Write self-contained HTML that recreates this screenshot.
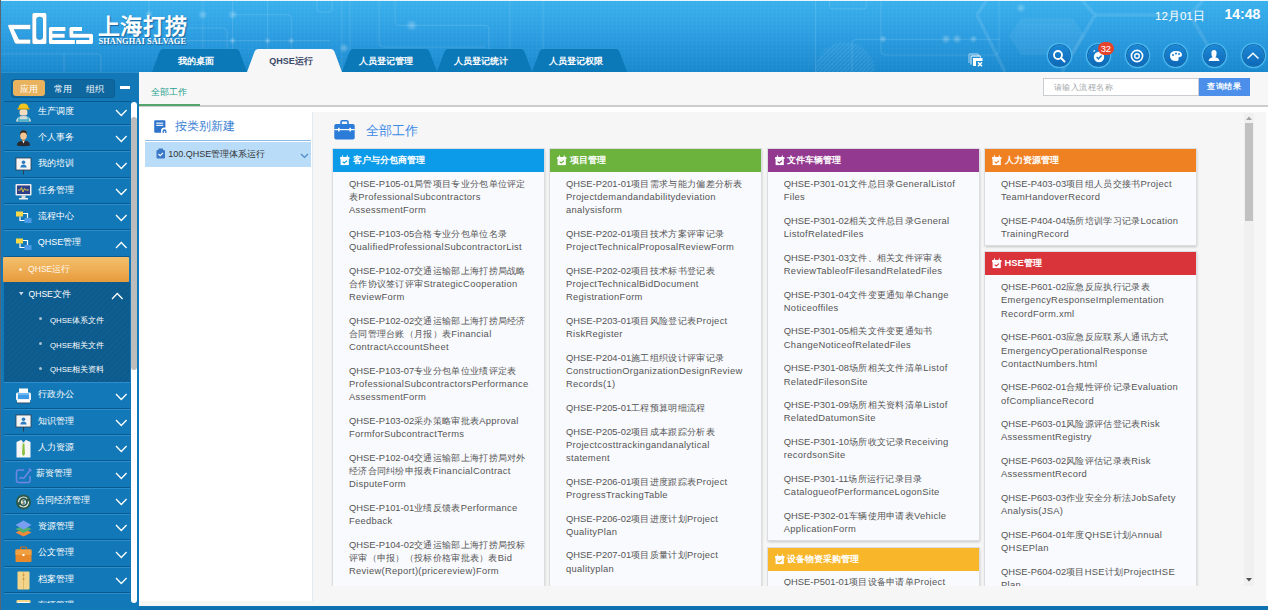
<!DOCTYPE html><html><head><meta charset="utf-8"><style>
*{margin:0;padding:0;box-sizing:border-box}
html,body{width:1268px;height:610px;overflow:hidden;font-family:"Liberation Sans",sans-serif;background:#0f74b2;position:relative}
.a{position:absolute}
#hdr{left:0;top:0;width:1268px;height:72px;background:linear-gradient(180deg,#3ab1ed 0%,#2d9fe2 45%,#1a88cd 100%);overflow:hidden}
.ln{position:absolute;border:1px solid rgba(255,255,255,.12)}
.logo-cn{left:98px;top:14px;font-family:"Liberation Serif",serif;font-weight:bold;font-size:22px;color:#fff;line-height:26px;letter-spacing:0.3px;text-shadow:1px 1px 1px rgba(0,40,90,.5)}
.logo-en{left:98.5px;top:37.5px;font-family:"Liberation Serif",serif;font-weight:bold;font-size:8.4px;color:#fff;line-height:8px;letter-spacing:0.08px;text-shadow:1px 1px 1px rgba(0,40,90,.5);white-space:nowrap}
.tab{position:absolute;top:49px;height:23px;width:95px;font-size:9px;font-weight:bold;text-align:center;line-height:25px;color:#fff}
.tab svg{position:absolute;left:0;top:0}
.tab span{position:relative;left:-3.6px}
.cbtn{position:absolute;top:45px;width:21px;height:21px;border-radius:50%;background:linear-gradient(180deg,#1c88d6 0%,#1477c6 55%,#0e68b6 100%);box-shadow:0 0 0 0.8px #0b5593, 0 0 0 2.1px #47b9f3, 0 0 1.5px 2.6px rgba(90,200,255,.3)}
.cbtn svg{position:absolute;left:0;top:0}
.date{left:1155px;top:8.5px;color:#fff;font-size:11.6px;line-height:13px;white-space:nowrap}
.time{left:1224.5px;top:6px;color:#fff;font-size:14px;font-weight:bold;line-height:16px}
#side{left:0;top:72px;width:139px;height:538px;background:#1378b7;overflow:hidden}
#side .lb{left:0;top:0;width:1px;height:538px;background:#5a6672}
#side .lb2{left:3px;top:0;width:1px;height:538px;background:#0d5f98}
.seg{left:10.5px;top:6.6px;width:104.5px;height:19px;background:#0e679f;border-radius:4px;box-shadow:inset 0 0 0 1px #0c5e93}
.seg .on{left:2.2px;top:1.8px;width:32.6px;height:15.5px;background:#e9b25e;border-radius:3px}
.seg span{position:absolute;top:0;line-height:19px;font-size:9.4px;color:#fff}
.minus{left:120px;top:14.2px;width:9.5px;height:2.8px;background:#fff}
.row{position:absolute;left:4px;width:127px;height:26.35px;border-top:1px solid #2a8fcc;border-bottom:1px solid #0a5a8f}
.row .t{position:absolute;left:33.8px;top:0;line-height:22.8px;font-size:9px;color:#fff;white-space:nowrap}
.row svg.ic{position:absolute;left:11.3px;top:3.5px}
.row svg.ch{position:absolute;left:110.5px;top:9.5px}
.sub{position:absolute;left:4px;width:127px;background:repeating-linear-gradient(135deg,#0e5e91 0px,#0e5e91 2px,#0d5b8d 2px,#0d5b8d 4px)}
.sub .t{position:absolute;font-size:9px;color:#fff;white-space:nowrap}
.sb{left:131px;top:30.2px;width:6px;height:500.5px;background:#fff;border-radius:3.5px}
.sbt{left:131px;top:45px;width:6px;height:252.5px;background:#bdbdbd;border-radius:3px}
#main{left:139px;top:72px;width:1129px;height:534px;background:#f0f0f0;overflow:hidden}
.thead{left:0;top:0;width:1129px;height:35px;background:#f7f7f7;border-bottom:2px solid #cdcdcd}
.thead .tt{left:11.5px;top:0;line-height:40px;font-size:9.4px;color:#26a08e}
.thead .gl{left:0;top:32px;width:61px;height:2px;background:#55a46e}
.srch{left:904px;top:5.8px;width:156px;height:18.5px;background:#fff;border:1px solid #c9ccd0}
.srch span{position:absolute;left:9.5px;top:0;line-height:17px;font-size:8px;letter-spacing:0.5px;color:#a0a4a8}
.sbtn{left:1060px;top:5.8px;width:50.5px;height:18.5px;background:#4b8fea;color:#fff;font-size:8px;letter-spacing:0.5px;line-height:18.5px;text-align:center;font-weight:bold}
.lpanel{left:0;top:34px;width:173px;height:494.5px;background:#fff}
.lp-title{left:36px;top:46.5px;font-size:12px;color:#3b7fd4;line-height:14px;white-space:nowrap}
.lp-line{left:5.8px;top:68px;width:166px;height:1px;background:#8bbbe6}
.lp-row{left:5.8px;top:69.6px;width:166px;height:25.9px;background:#b9ddf9;box-shadow:0 -0.6px 0 #fff}
.lp-row .t{position:absolute;left:23.5px;top:0;line-height:24.2px;font-size:9px;color:#333;white-space:nowrap}
.rpanel{left:173px;top:40px;width:1129px;height:474px;background:#f5f5f5;border-left:1px solid #e4e6e8}
.rtitle{left:226.6px;top:51px;font-size:13.4px;color:#3b8ae6;line-height:16px;white-space:nowrap}
.card{position:absolute;width:211px;background:#f9fafe;box-shadow:0 0 0 1px #dcdde0,0.5px 1px 2.5px 0.5px rgba(0,0,0,.2)}
.card .h{height:22.9px;line-height:22.9px;color:#fff;font-size:9.4px;font-weight:bold;padding-left:19.5px;position:relative;white-space:nowrap}
.card .h svg{position:absolute;left:7.3px;top:5px}
.card .b{padding:6px 4px 4px 16px}
.card .it{font-size:9.4px;color:#555;margin-bottom:10.5px;white-space:nowrap;letter-spacing:0.3px}
.card .it div{height:13.2px;line-height:13.2px}
.card .it b{font-weight:normal;letter-spacing:0}
.vsb{left:1104px;top:40px;width:10.5px;height:474px;background:#f1f1f1}
.vsb .th{position:absolute;left:1.5px;top:11px;width:7.5px;height:98px;background:#c1c1c1}
.bottombar{left:139px;top:606px;width:1129px;height:4px;background:#0f72b0}
</style></head><body><div id="hdr" class="a"><svg class="a" style="left:0;top:0" width="1268" height="72"><defs><radialGradient id="gl"><stop offset="0" stop-color="#fff" stop-opacity=".3"/><stop offset="1" stop-color="#fff" stop-opacity="0"/></radialGradient>
<pattern id="grid" width="4" height="4" patternUnits="userSpaceOnUse"><path d="M4,0 L0,0 0,4" fill="none" stroke="rgba(255,255,255,.035)" stroke-width="1"/></pattern>
<pattern id="hatch" width="3" height="3" patternUnits="userSpaceOnUse" patternTransform="rotate(45)"><rect width="1.2" height="3" fill="rgba(255,255,255,.10)"/></pattern></defs>
<rect x="0" y="0" width="1268" height="72" fill="url(#grid)"/>
<g fill="none" stroke="rgba(255,255,255,.16)" stroke-width="0.8">
<path d="M149,0 V45"/><path d="M0,54 H98 Q101,54 101,57 V72"/><path d="M64,54 V72"/>
<path d="M202.8,0 V72"/><path d="M232.6,0 V72"/><path d="M267.6,0 V72"/><path d="M232.6,14.7 H287.5 Q291.3,14.7 291.3,18.5 V72"/><path d="M150,40.7 H330"/><path d="M180,27.9 H222 Q227,27.9 227,33 V72"/>
<path d="M317,-3 V9 Q317,12 320,12 H329 Q332,12 332,9 V-3"/><path d="M342,0 V72"/><path d="M350,0 V72"/>
<path d="M379,0 V42 Q379,47 384,47 H485"/><path d="M395,0 V21 Q395,25.4 399,25.4 H485 Q489,25.4 489,30 V72"/>
<path d="M510,0 V72"/><path d="M543,0 V72"/>
<path d="M815.5,0 V72"/><path d="M829.5,-3 V6 Q829.5,9 832.5,9 H863.5 Q866.4,9 866.4,6 V-3"/>
<path d="M881,-3 V51 Q881,55 885,55 H995 Q999,55 999,51 V-3"/><path d="M852,72 V43 Q852,39.4 856,39.4 H1000"/>
</g>
<g fill="none" stroke="rgba(255,255,255,.10)" stroke-width="3.5">
<path d="M977,15 L988,-2 M977,15 L1005,72 M1095,15 L1080,-2 M1095,15 L1062,72"/><path d="M1095,15 L1190,15 L1205,-2 M1190,15 L1215,58"/>
</g>
<path d="M1021,18 H1073 L1085,36 L1073,55 H1021 L1009,36 Z" fill="rgba(255,255,255,.06)"/>
<circle cx="845" cy="72" r="30" fill="url(#hatch)"/>
<g fill="url(#gl)"><circle cx="202.8" cy="14.7" r="5"/><circle cx="232.6" cy="14.7" r="5"/><circle cx="232.6" cy="40.7" r="3.5"/><circle cx="267.6" cy="40.7" r="3.5"/><circle cx="291.3" cy="40.7" r="3.5"/><circle cx="411.7" cy="25.4" r="6"/><circle cx="344" cy="48" r="5"/><circle cx="149" cy="14" r="4"/>
<circle cx="883" cy="39" r="4"/><circle cx="946" cy="39" r="5"/><circle cx="957" cy="39" r="5"/><circle cx="973.5" cy="39" r="4"/><circle cx="1021" cy="8" r="5"/></g>
</svg><div class="a" style="left:0;top:0;width:1268px;height:1px;background:#e8f4fb"></div><div class="a" style="left:0;top:0;width:1px;height:72px;background:#5a6672"></div><svg class="a" style="left:0;top:0" width="100" height="50"><g fill="#fff" style="filter:drop-shadow(0.8px 0.8px 0.5px rgba(0,30,70,.6))">
<path d="M9.2,24.7 L30.4,24.7 L30.4,29.2 L13.8,29.2 L19,39.6 L30.4,39.6 L30.4,43.8 L16.8,43.8 Q15.2,43.8 14.6,42.6 L8.2,26.6 Q7.8,24.7 9.2,24.7 Z"/>
<path fill-rule="evenodd" d="M33.8,12.9 L45,12.9 Q46.5,12.9 46.5,14.4 L46.5,42.5 Q46.5,44 45,44 L33.8,44 Q32.3,44 32.3,42.5 L32.3,14.4 Q32.3,12.9 33.8,12.9 Z M39.6,16.8 Q36.3,16.8 36.3,20 L36.3,36.5 Q36.3,39.7 39.6,39.7 Q43,39.7 43,36.5 L43,20 Q43,16.8 39.6,16.8 Z"/>
<path d="M50.4,27.1 L65.5,27.1 L65.5,31 L52.5,31 L52.5,33.8 L64.7,33.8 L64.7,37.7 L52.5,37.7 L52.5,40.1 L74.9,40.1 L74.9,44 L50.4,44 Q48.9,44 48.9,42.5 L48.9,28.6 Q48.9,27.1 50.4,27.1 Z"/>
<path d="M70.9,27.1 L82,27.1 L82,31 L73.3,31 L73.3,33.8 L91.5,33.8 Q93,33.8 93,35.3 L93,42.5 Q93,44 91.5,44 L76.1,44 L76.1,40.1 L89.2,40.1 L89.2,37.7 L70.9,37.7 Q69.4,37.7 69.4,36.2 L69.4,28.6 Q69.4,27.1 70.9,27.1 Z"/>
</g></svg><div class="a logo-cn" lang="zh-CN">上海打捞</div><div class="a logo-en">SHANGHAI SALVAGE</div><div class="tab" style="left:152.00px;color:#fff"><svg width="96" height="23"><path d="M0,23 L7.6,2.5 Q8.5,0 11,0 L84,0 Q86.5,0 87.4,2.5 L95,23 Z" fill="#0b78b8"/></svg><span>我的桌面</span></div><div class="tab" style="left:247.10px;color:#3b4868"><svg width="96" height="23"><path d="M0,23 L7.6,2.5 Q8.5,0 11,0 L84,0 Q86.5,0 87.4,2.5 L95,23 Z" fill="#f7f7f7"/></svg><span>QHSE运行</span></div><div class="tab" style="left:342.20px;color:#fff"><svg width="96" height="23"><path d="M0,23 L7.6,2.5 Q8.5,0 11,0 L84,0 Q86.5,0 87.4,2.5 L95,23 Z" fill="#0b78b8"/></svg><span>人员登记管理</span></div><div class="tab" style="left:437.30px;color:#fff"><svg width="96" height="23"><path d="M0,23 L7.6,2.5 Q8.5,0 11,0 L84,0 Q86.5,0 87.4,2.5 L95,23 Z" fill="#0b78b8"/></svg><span>人员登记统计</span></div><div class="tab" style="left:532.40px;color:#fff"><svg width="96" height="23"><path d="M0,23 L7.6,2.5 Q8.5,0 11,0 L84,0 Q86.5,0 87.4,2.5 L95,23 Z" fill="#0b78b8"/></svg><span>人员登记权限</span></div><svg class="a" style="left:968.3px;top:53px" width="17" height="15"><path d="M1,10 V2 Q1,1 2,1 H9.5 Q10.5,1 10.5,2 V3" fill="none" stroke="rgba(255,255,255,.45)" stroke-width="1.3"/><path d="M3,11.5 V4 Q3,3 4,3 H11.5 Q12.5,3 12.5,4 V4.8" fill="none" stroke="rgba(255,255,255,.7)" stroke-width="1.3"/><path d="M5,13 V5 H14.5 V8 H8 V13 Z" fill="#fff"/><path d="M10,9.3 L14,13.3 M14,9.3 L10,13.3" stroke="#fff" stroke-width="1.5"/></svg><div class="cbtn" style="left:1048.8px"><svg width="22" height="22" style="left:-0.5px;top:-0.5px"><circle cx="10" cy="10" r="4" fill="none" stroke="#fff" stroke-width="1.8"/><path d="M13,13 L16.5,16.5" stroke="#fff" stroke-width="2" stroke-linecap="round"/></svg></div><div class="cbtn" style="left:1088.0px"><svg width="22" height="22" style="left:-0.5px;top:-0.5px"><circle cx="11" cy="12" r="5.2" fill="#fff"/><path d="M8.6,12 L10.4,13.8 L13.6,10.4" fill="none" stroke="#1a7ac8" stroke-width="1.5"/><path d="M5.5,6.5 L7,5.5" stroke="#fff" stroke-width="1.2"/></svg></div><div class="cbtn" style="left:1126.5px"><svg width="22" height="22" style="left:-0.5px;top:-0.5px"><circle cx="11" cy="11" r="5.6" fill="none" stroke="#fff" stroke-width="1.6"/><circle cx="11" cy="11" r="2.3" fill="none" stroke="#fff" stroke-width="1.4"/></svg></div><div class="cbtn" style="left:1165.3px"><svg width="22" height="22" style="left:-0.5px;top:-0.5px"><path d="M5,11 Q5,6 11,6 Q17,6 17,10 Q17,12 14.5,12 Q13,12 13.5,14 Q14,16 11,16 Q5,16 5,11 Z" fill="#fff"/><circle cx="8" cy="10" r="1" fill="#1a7ac8"/><circle cx="11" cy="8.5" r="1" fill="#1a7ac8"/><circle cx="14" cy="9" r="0.9" fill="#1a7ac8"/></svg></div><div class="cbtn" style="left:1203.5px"><svg width="22" height="22" style="left:-0.5px;top:-0.5px"><path d="M11,5 Q13.6,5 13.6,8.3 Q13.6,11 12.3,12.2 Q16,13 16.5,16 L5.5,16 Q6,13 9.7,12.2 Q8.4,11 8.4,8.3 Q8.4,5 11,5 Z" fill="#fff"/></svg></div><div class="cbtn" style="left:1242.5px"><svg width="22" height="22" style="left:-0.5px;top:-0.5px"><path d="M5.5,13.5 L11,8.3 L16.5,13.5" fill="none" stroke="#fff" stroke-width="1.5"/></svg></div><div class="a" style="left:1098px;top:42px;width:15.7px;height:13px;border-radius:6.5px;background:#e6432c;color:#fff;font-size:9.4px;line-height:13px;text-align:center">32</div><div class="a date">12月01日</div><div class="a time">14:48</div></div><div id="side" class="a"><div class="a lb"></div><div class="a" style="left:1px;top:0;width:138px;height:1px;background:#2c8fcc"></div><div class="a seg"><div class="a on"></div><span style="left:9.5px">应用</span><span style="left:43.5px">常用</span><span style="left:75.5px">组织</span></div><div class="a minus"></div><div class="a" style="left:4px;top:29.2px;width:127px;height:1px;background:#0a5a8f"></div><div class="a" style="left:0;top:30.2px;width:130px;height:501.3px;overflow:hidden"><div class="row" style="top:-3.65px"><svg class="ic" width="17" height="20"><path d="M3.5,5.5 Q3.5,0.5 8.5,0.5 Q13.5,0.5 13.5,5.5 Z" fill="#f2c61f"/><rect x="2.5" y="5" width="12" height="1.6" fill="#e0a800"/><rect x="4.6" y="6.5" width="7.8" height="6" rx="2" fill="#f3dcc0"/><path d="M1,18.5 Q1.5,13 8.5,13 Q15.5,13 16,18.5 Z" fill="#d8d8d8"/><rect x="3" y="16.3" width="11" height="1.6" fill="#35b4c8"/><path d="M4,13.5 L4,18 M13,13.5 L13,18" stroke="#35b4c8" stroke-width="1.2"/></svg><span class="t">生产调度</span><svg class="ch" width="13" height="8"><path d="M1,1 L6.3,6.5 L11.6,1" fill="none" stroke="#fff" stroke-width="1.3"/></svg></div><div class="row" style="top:22.70px"><svg class="ic" width="17" height="20"><path d="M5.2,6.5 Q5.2,2.2 8.5,2.2 Q11.8,2.2 11.8,6.5 Q11.8,10.8 8.5,10.8 Q5.2,10.8 5.2,6.5 Z" fill="#f6c690"/><path d="M5,6 Q4.8,1.3 8.5,1.3 Q12.2,1.3 12,6 Q11,3.6 8.5,3.6 Q6,3.6 5,6 Z" fill="#3b2a20"/><path d="M7.3,10.3 L9.7,10.3 L9.7,12 L7.3,12 Z" fill="#e8a860"/><path d="M1.8,16.5 Q1.8,12 8.5,11.8 Q15.2,12 15.2,16.5 Q8.5,17.8 1.8,16.5 Z" fill="#2a2a30"/><path d="M7.4,12 L8.5,14.5 L9.6,12 Z" fill="#fff"/></svg><span class="t">个人事务</span><svg class="ch" width="13" height="8"><path d="M1,1 L6.3,6.5 L11.6,1" fill="none" stroke="#fff" stroke-width="1.3"/></svg></div><div class="row" style="top:49.05px"><svg class="ic" width="17" height="20"><rect x="1" y="2" width="15" height="12" fill="#f4f4f4" stroke="#2c3e50" stroke-width="0.8"/><circle cx="8.5" cy="6.3" r="1.8" fill="#2a7ac0"/><path d="M5.3,11.5 Q5.8,8.5 8.5,8.5 Q11.2,8.5 11.7,11.5 Z" fill="#2a7ac0"/><path d="M8.5,14 L8.5,18.5" stroke="#2c3e50" stroke-width="1"/></svg><span class="t">我的培训</span><svg class="ch" width="13" height="8"><path d="M1,1 L6.3,6.5 L11.6,1" fill="none" stroke="#fff" stroke-width="1.3"/></svg></div><div class="row" style="top:75.40px"><svg class="ic" width="17" height="20"><rect x="0.5" y="2" width="16" height="11.5" rx="1" fill="#eeeeee"/><rect x="2" y="3.5" width="13" height="8.5" fill="#2f3f8a"/><path d="M3,8 L5.5,8 L6.5,5.5 L8,10 L9.5,6.5 L10.5,8 L14,8" fill="none" stroke="#e8d040" stroke-width="0.9"/><rect x="6.5" y="13.5" width="4" height="2.5" fill="#ddd"/><rect x="4" y="16" width="9" height="1.5" fill="#eee"/></svg><span class="t">任务管理</span><svg class="ch" width="13" height="8"><path d="M1,1 L6.3,6.5 L11.6,1" fill="none" stroke="#fff" stroke-width="1.3"/></svg></div><div class="row" style="top:101.75px"><svg class="ic" width="17" height="20"><rect x="1" y="3.5" width="7" height="5" fill="#f6d94a"/><rect x="9.5" y="10" width="7" height="5" fill="#4a9ae8"/><path d="M5,8.5 L5,12.5 L9.5,12.5 M8,5.5 L12.5,5.5 L12.5,10" fill="none" stroke="#fff" stroke-width="1.2"/></svg><span class="t">流程中心</span><svg class="ch" width="13" height="8"><path d="M1,1 L6.3,6.5 L11.6,1" fill="none" stroke="#fff" stroke-width="1.3"/></svg></div><div class="row" style="top:128.10px"><svg class="ic" width="17" height="20"><rect x="1" y="3.5" width="7" height="5" fill="#f6d94a"/><rect x="9.5" y="10" width="7" height="5" fill="#4a9ae8"/><path d="M5,8.5 L5,12.5 L9.5,12.5 M8,5.5 L12.5,5.5 L12.5,10" fill="none" stroke="#fff" stroke-width="1.2"/></svg><span class="t">QHSE管理</span><svg class="ch" width="13" height="8"><path d="M1,7 L6.3,1.5 L11.6,7" fill="none" stroke="#fff" stroke-width="1.3"/></svg></div><div class="a" style="left:3px;top:155px;width:126px;height:24.7px;background:linear-gradient(180deg,#f3bf6c 0%,#eeae55 50%,#e79b3d 100%);border-radius:1px"></div><div class="a" style="left:19.3px;top:165.5px;width:3px;height:3px;border-radius:50%;background:#f8e6c8"></div><span class="a" style="left:28px;top:155px;line-height:24.7px;font-size:8.6px;color:#fdf6ea">QHSE运行</span><div class="sub" style="top:179.7px;height:100.3px"></div><svg class="a" style="left:18.5px;top:190px" width="5" height="4"><path d="M0,0 L4.5,0 L2.25,3.5 Z" fill="#c8d8e4"/></svg><span class="a" style="left:28.5px;top:180px;line-height:25px;font-size:8.6px;color:#fff">QHSE文件</span><svg class="a" style="left:110.5px;top:189.5px" width="13" height="8"><path d="M1,7 L6.3,1.5 L11.6,7" fill="none" stroke="#fff" stroke-width="1.3"/></svg><div class="a" style="left:39px;top:215.30px;width:3px;height:3px;border-radius:50%;background:#a9bfce"></div><span class="a" style="left:50px;top:205.60px;line-height:25px;font-size:7.8px;color:#fff">QHSE体系文件</span><div class="a" style="left:39px;top:240.15px;width:3px;height:3px;border-radius:50%;background:#a9bfce"></div><span class="a" style="left:50px;top:230.45px;line-height:25px;font-size:7.8px;color:#fff">QHSE相关文件</span><div class="a" style="left:39px;top:265.00px;width:3px;height:3px;border-radius:50%;background:#a9bfce"></div><span class="a" style="left:50px;top:255.30px;line-height:25px;font-size:7.8px;color:#fff">QHSE相关资料</span><div class="row" style="top:280.00px"><svg class="ic" width="17" height="20"><rect x="4" y="1.5" width="9" height="5" fill="#fff"/><rect x="1" y="5.5" width="15" height="8" rx="1.5" fill="#eef2f6"/><rect x="3" y="6" width="11" height="6" fill="#3d9ae6"/><rect x="3" y="6" width="11" height="2" fill="#6cb8f2"/><rect x="2" y="13" width="13" height="3" fill="#fff"/><rect x="1.5" y="15.5" width="14" height="0.9" fill="#33485c"/></svg><span class="t">行政办公</span><svg class="ch" width="13" height="8"><path d="M1,1 L6.3,6.5 L11.6,1" fill="none" stroke="#fff" stroke-width="1.3"/></svg></div><div class="row" style="top:306.35px"><svg class="ic" width="17" height="20"><rect x="1" y="2" width="15" height="12" fill="#f4f4f4" stroke="#2c3e50" stroke-width="0.8"/><circle cx="8.5" cy="6.3" r="1.8" fill="#2a7ac0"/><path d="M5.3,11.5 Q5.8,8.5 8.5,8.5 Q11.2,8.5 11.7,11.5 Z" fill="#2a7ac0"/><path d="M8.5,14 L8.5,18.5" stroke="#2c3e50" stroke-width="1"/></svg><span class="t">知识管理</span><svg class="ch" width="13" height="8"><path d="M1,1 L6.3,6.5 L11.6,1" fill="none" stroke="#fff" stroke-width="1.3"/></svg></div><div class="row" style="top:332.70px"><svg class="ic" width="17" height="20"><path d="M1.5,3 L6,1 L8.5,4 L11,1 L15.5,3 L15.5,18.5 L1.5,18.5 Z" fill="#f6f6f6"/><path d="M7.6,4.5 L9.4,4.5 L10,15 L8.5,17 L7,15 Z" fill="#8ac040"/><path d="M6,1 L8.5,4 L11,1" fill="none" stroke="#ddd" stroke-width="0.8"/></svg><span class="t">人力资源</span><svg class="ch" width="13" height="8"><path d="M1,1 L6.3,6.5 L11.6,1" fill="none" stroke="#fff" stroke-width="1.3"/></svg></div><div class="row" style="top:359.05px"><svg class="ic" width="17" height="20"><path d="M9,4 H3.5 Q1.5,4 1.5,6 V14.5 Q1.5,16.5 3.5,16.5 H13 Q15,16.5 15,14.5 V10" fill="none" stroke="#6f86e6" stroke-width="1.5"/><path d="M4.5,13 Q6,10.5 7.5,12 Q8.5,13 9.5,11.5 L15.5,3.5" fill="none" stroke="#6f86e6" stroke-width="1.5"/><path d="M14,2.5 L16.5,5" stroke="#6f86e6" stroke-width="1.5"/></svg><span class="t" style="left:32.3px">薪资管理</span><svg class="ch" width="13" height="8"><path d="M1,1 L6.3,6.5 L11.6,1" fill="none" stroke="#fff" stroke-width="1.3"/></svg></div><div class="row" style="top:385.40px"><svg class="ic" width="17" height="20"><circle cx="8.5" cy="10" r="7.5" fill="#2c5a4a"/><circle cx="8.5" cy="10" r="5" fill="none" stroke="#e8e8e8" stroke-width="1.2" stroke-dasharray="12 3"/><circle cx="8.5" cy="10" r="2.6" fill="#e8e8e8"/><text x="8.5" y="12" font-size="4.5" fill="#2c5a4a" text-anchor="middle" font-family="Liberation Sans" font-weight="bold">$</text></svg><span class="t" style="left:32.3px">合同经济管理</span><svg class="ch" width="13" height="8"><path d="M1,1 L6.3,6.5 L11.6,1" fill="none" stroke="#fff" stroke-width="1.3"/></svg></div><div class="row" style="top:411.75px"><svg class="ic" width="17" height="20"><path d="M8.5,11 L16.5,14.5 L8.5,18.5 L0.5,14.5 Z" fill="#f08a3a"/><path d="M8.5,7.5 L16.5,11 L8.5,15 L0.5,11 Z" fill="#50b070"/><path d="M8.5,2.5 L16.5,7 L8.5,11.5 L0.5,7 Z" fill="#7a9ef0"/></svg><span class="t">资源管理</span><svg class="ch" width="13" height="8"><path d="M1,1 L6.3,6.5 L11.6,1" fill="none" stroke="#fff" stroke-width="1.3"/></svg></div><div class="row" style="top:438.10px"><svg class="ic" width="17" height="20"><rect x="5.5" y="2" width="6" height="3" rx="1" fill="none" stroke="#c87020" stroke-width="1.2"/><rect x="0.5" y="4.5" width="16" height="12.5" rx="1.5" fill="#e88a2a"/><rect x="0.5" y="4.5" width="16" height="5.5" fill="#f0a040"/><rect x="7.5" y="9" width="2" height="2" fill="#fff"/></svg><span class="t">公文管理</span><svg class="ch" width="13" height="8"><path d="M1,1 L6.3,6.5 L11.6,1" fill="none" stroke="#fff" stroke-width="1.3"/></svg></div><div class="row" style="top:464.45px"><svg class="ic" width="17" height="20"><rect x="2.5" y="0.5" width="12" height="18" rx="1" fill="#f2d48a"/><path d="M8.5,1 L8.5,18" stroke="#d8b060" stroke-width="0.8"/><circle cx="8.5" cy="4" r="1" fill="#c89840"/><circle cx="8.5" cy="8" r="1" fill="#c89840"/></svg><span class="t">档案管理</span><svg class="ch" width="13" height="8"><path d="M1,1 L6.3,6.5 L11.6,1" fill="none" stroke="#fff" stroke-width="1.3"/></svg></div><div class="row" style="top:490.80px"><svg class="ic" width="17" height="20"><rect x="1.5" y="3" width="14" height="6" rx="1" fill="#f2d48a"/><rect x="3" y="5" width="11" height="1.5" fill="#fff"/></svg><span class="t">车辆管理</span><svg class="ch" width="13" height="8"><path d="M1,1 L6.3,6.5 L11.6,1" fill="none" stroke="#fff" stroke-width="1.3"/></svg></div></div><div class="a sb"></div><div class="a sbt"></div></div><div id="main" class="a"><div class="a" style="left:0;top:34px;width:1129px;height:500px;background:#fff"></div><div class="a thead"><span class="a tt">全部工作</span><div class="a gl"></div></div><div class="a srch"><span>请输入流程名称</span></div><div class="a sbtn">查询结果</div><svg class="a" style="left:15px;top:48px" width="15" height="14"><rect x="0.2" y="0.3" width="11.2" height="12.5" rx="1.2" fill="#2f74cc"/><rect x="2.2" y="2.6" width="7" height="1.1" fill="#fff"/><rect x="2.2" y="4.8" width="7" height="1.1" fill="#fff"/><path d="M7,13.5 V11 Q7,7.6 10.5,7.6 Q14,7.6 14,11 V13.5 Z" fill="#fff"/><path d="M8.6,13 V11.2 Q8.6,9.3 10.5,9.3 Q12.4,9.3 12.4,11.2 V13 Z" fill="#2f74cc"/><rect x="9.8" y="11.2" width="1.4" height="1.8" fill="#fff"/></svg><span class="a lp-title">按类别新建</span><div class="a lp-line"></div><div class="a lp-row"><svg class="a" style="left:11px;top:6.3px" width="10" height="11"><rect x="0.5" y="2" width="8.5" height="8.5" rx="1" fill="#3a78c8"/><rect x="2.5" y="0.5" width="4.5" height="2.5" fill="#3a78c8"/><path d="M2.5,6 L4.2,7.7 L7,4.8" fill="none" stroke="#fff" stroke-width="1.1"/></svg><span class="t">100.QHSE管理体系运行</span><svg class="a" style="left:155.5px;top:11px" width="9" height="6"><path d="M1,1 L4.5,4.5 L8,1" fill="none" stroke="#4a88c8" stroke-width="1.2"/></svg></div><div class="a" style="left:173.3px;top:40.3px;width:953.7px;height:488.4px;background:#f6f6f6;border-left:1px solid #e2eaf2"></div><svg class="a" style="left:195.4px;top:47.7px" width="21" height="20"><path d="M7,4 L7,2 Q7,0.8 8.2,0.8 L12.8,0.8 Q14,0.8 14,2 L14,4" fill="none" stroke="#2b7cd8" stroke-width="1.6"/><rect x="0.3" y="4" width="20.4" height="15.5" rx="1.8" fill="#2b7cd8"/><rect x="0.3" y="9" width="20.4" height="1.2" fill="#fff"/><rect x="4" y="7.8" width="1.6" height="3.6" fill="#fff"/><rect x="15.4" y="7.8" width="1.6" height="3.6" fill="#fff"/></svg><span class="a rtitle">全部工作</span><div class="a" style="left:174px;top:40.3px;width:930px;height:473.3px;overflow:hidden"><div class="card" style="left:20.0px;top:36.90px"><div class="h" style="background:#0b9be9"><svg width="10" height="12"><path d="M1.6,3.4 L2.3,0.6 L3.6,3.4 Z M6.1,3.4 L7.4,0.6 L8.1,3.4 Z" fill="#fff" opacity=".85"/><rect x="0" y="3" width="9.6" height="2.2" rx="0.8" fill="#fff"/><rect x="0.6" y="5.1" width="8.2" height="6" fill="#fff"/><path d="M2.6,7.6 L4.2,9 L7,6.7" fill="none" stroke="#0b9be9" stroke-width="1.1"/></svg>客户与分包商管理</div><div class="b" style="height:447.30px;padding-top:4.9px"><div class="it"><div><b>QHSE-P105-01</b>局管项目专业分包单位评定</div><div>表ProfessionalSubcontractors</div><div>AssessmentForm</div></div><div class="it"><div><b>QHSE-P103-05</b>合格专业分包单位名录</div><div>QualifiedProfessionalSubcontractorList</div></div><div class="it"><div><b>QHSE-P102-07</b>交通运输部上海打捞局战略</div><div>合作协议签订评审StrategicCooperation</div><div>ReviewForm</div></div><div class="it"><div><b>QHSE-P102-02</b>交通运输部上海打捞局经济</div><div>合同管理台账（月报）表Financial</div><div>ContractAccountSheet</div></div><div class="it"><div><b>QHSE-P103-07</b>专业分包单位业绩评定表</div><div>ProfessionalSubcontractorsPerformance</div><div>AssessmentForm</div></div><div class="it"><div><b>QHSE-P103-02</b>采办策略审批表Approval</div><div>FormforSubcontractTerms</div></div><div class="it"><div><b>QHSE-P102-04</b>交通运输部上海打捞局对外</div><div>经济合同纠纷申报表FinancialContract</div><div>DisputeForm</div></div><div class="it"><div><b>QHSE-P101-01</b>业绩反馈表Performance</div><div>Feedback</div></div><div class="it"><div><b>QHSE-P104-02</b>交通运输部上海打捞局投标</div><div>评审（申报）（投标价格审批表）表Bid</div><div>Review(Report)(pricereview)Form</div></div><div class="it"><div><b>QHSE-P104-03</b>投标评审记录Bid</div><div>ReviewRecord</div></div></div></div><div class="card" style="left:237.0px;top:36.90px"><div class="h" style="background:#6cb33e"><svg width="10" height="12"><path d="M1.6,3.4 L2.3,0.6 L3.6,3.4 Z M6.1,3.4 L7.4,0.6 L8.1,3.4 Z" fill="#fff" opacity=".85"/><rect x="0" y="3" width="9.6" height="2.2" rx="0.8" fill="#fff"/><rect x="0.6" y="5.1" width="8.2" height="6" fill="#fff"/><path d="M2.6,7.6 L4.2,9 L7,6.7" fill="none" stroke="#6cb33e" stroke-width="1.1"/></svg>项目管理</div><div class="b" style="height:444.60px;padding-top:4.9px"><div class="it"><div><b>QHSE-P201-01</b>项目需求与能力偏差分析表</div><div>Projectdemandandabilitydeviation</div><div>analysisform</div></div><div class="it"><div><b>QHSE-P202-01</b>项目技术方案评审记录</div><div>ProjectTechnicalProposalReviewForm</div></div><div class="it"><div><b>QHSE-P202-02</b>项目技术标书登记表</div><div>ProjectTechnicalBidDocument</div><div>RegistrationForm</div></div><div class="it"><div><b>QHSE-P203-01</b>项目风险登记表Project</div><div>RiskRegister</div></div><div class="it"><div><b>QHSE-P204-01</b>施工组织设计评审记录</div><div>ConstructionOrganizationDesignReview</div><div>Records(1)</div></div><div class="it"><div><b>QHSE-P205-01</b>工程预算明细流程</div></div><div class="it"><div><b>QHSE-P205-02</b>项目成本跟踪分析表</div><div>Projectcosttrackingandanalytical</div><div>statement</div></div><div class="it"><div><b>QHSE-P206-01</b>项目进度跟踪表Project</div><div>ProgressTrackingTable</div></div><div class="it"><div><b>QHSE-P206-02</b>项目进度计划Project</div><div>QualityPlan</div></div><div class="it"><div><b>QHSE-P207-01</b>项目质量计划Project</div><div>qualityplan</div></div><div class="it"><div><b>QHSE-P208-01</b>项目完工报告Project</div><div>CompletionReport</div></div></div></div><div class="card" style="left:454.8px;top:36.90px"><div class="h" style="background:#93398f"><svg width="10" height="12"><path d="M1.6,3.4 L2.3,0.6 L3.6,3.4 Z M6.1,3.4 L7.4,0.6 L8.1,3.4 Z" fill="#fff" opacity=".85"/><rect x="0" y="3" width="9.6" height="2.2" rx="0.8" fill="#fff"/><rect x="0.6" y="5.1" width="8.2" height="6" fill="#fff"/><path d="M2.6,7.6 L4.2,9 L7,6.7" fill="none" stroke="#93398f" stroke-width="1.1"/></svg>文件车辆管理</div><div class="b" style="height:368.10px;padding-top:4.9px"><div class="it"><div><b>QHSE-P301-01</b>文件总目录GeneralListof</div><div>Files</div></div><div class="it"><div><b>QHSE-P301-02</b>相关文件总目录General</div><div>ListofRelatedFiles</div></div><div class="it"><div><b>QHSE-P301-03</b>文件、相关文件评审表</div><div>ReviewTableofFilesandRelatedFiles</div></div><div class="it"><div><b>QHSE-P301-04</b>文件变更通知单Change</div><div>Noticeoffiles</div></div><div class="it"><div><b>QHSE-P301-05</b>相关文件变更通知书</div><div>ChangeNoticeofRelatedFiles</div></div><div class="it"><div><b>QHSE-P301-08</b>场所相关文件清单Listof</div><div>RelatedFilesonSite</div></div><div class="it"><div><b>QHSE-P301-09</b>场所相关资料清单Listof</div><div>RelatedDatumonSite</div></div><div class="it"><div><b>QHSE-P301-10</b>场所收文记录Receiving</div><div>recordsonSite</div></div><div class="it"><div><b>QHSE-P301-11</b>场所运行记录目录</div><div>CatalogueofPerformanceLogonSite</div></div><div class="it"><div><b>QHSE-P302-01</b>车辆使用申请表Vehicle</div><div>ApplicationForm</div></div></div></div><div class="card" style="left:454.8px;top:435.40px"><div class="h" style="background:#f8b62a"><svg width="10" height="12"><path d="M1.6,3.4 L2.3,0.6 L3.6,3.4 Z M6.1,3.4 L7.4,0.6 L8.1,3.4 Z" fill="#fff" opacity=".85"/><rect x="0" y="3" width="9.6" height="2.2" rx="0.8" fill="#fff"/><rect x="0.6" y="5.1" width="8.2" height="6" fill="#fff"/><path d="M2.6,7.6 L4.2,9 L7,6.7" fill="none" stroke="#f8b62a" stroke-width="1.1"/></svg>设备物资采购管理</div><div class="b" style="height:72.90px;padding-top:4.9px"><div class="it"><div><b>QHSE-P501-01</b>项目设备申请单Project</div><div>EquipmentApplicationForm</div></div><div class="it"><div><b>QHSE-P501-02</b>项目物资申请单Project</div><div>MaterialApplicationForm</div></div></div></div><div class="card" style="left:672.0px;top:36.90px"><div class="h" style="background:#f08122"><svg width="10" height="12"><path d="M1.6,3.4 L2.3,0.6 L3.6,3.4 Z M6.1,3.4 L7.4,0.6 L8.1,3.4 Z" fill="#fff" opacity=".85"/><rect x="0" y="3" width="9.6" height="2.2" rx="0.8" fill="#fff"/><rect x="0.6" y="5.1" width="8.2" height="6" fill="#fff"/><path d="M2.6,7.6 L4.2,9 L7,6.7" fill="none" stroke="#f08122" stroke-width="1.1"/></svg>人力资源管理</div><div class="b" style="height:72.90px;padding-top:4.9px"><div class="it"><div><b>QHSE-P403-03</b>项目组人员交接书Project</div><div>TeamHandoverRecord</div></div><div class="it"><div><b>QHSE-P404-04</b>场所培训学习记录Location</div><div>TrainingRecord</div></div></div></div><div class="card" style="left:672.0px;top:140.20px"><div class="h" style="background:#da343b"><svg width="10" height="12"><path d="M1.6,3.4 L2.3,0.6 L3.6,3.4 Z M6.1,3.4 L7.4,0.6 L8.1,3.4 Z" fill="#fff" opacity=".85"/><rect x="0" y="3" width="9.6" height="2.2" rx="0.8" fill="#fff"/><rect x="0.6" y="5.1" width="8.2" height="6" fill="#fff"/><path d="M2.6,7.6 L4.2,9 L7,6.7" fill="none" stroke="#da343b" stroke-width="1.1"/></svg>HSE管理</div><div class="b" style="height:357.60px;padding-top:4.9px"><div class="it"><div><b>QHSE-P601-02</b>应急反应执行记录表</div><div>EmergencyResponseImplementation</div><div>RecordForm.xml</div></div><div class="it"><div><b>QHSE-P601-03</b>应急反应联系人通讯方式</div><div>EmergencyOperationalResponse</div><div>ContactNumbers.html</div></div><div class="it"><div><b>QHSE-P602-01</b>合规性评价记录Evaluation</div><div>ofComplianceRecord</div></div><div class="it"><div><b>QHSE-P603-01</b>风险源评估登记表Risk</div><div>AssessmentRegistry</div></div><div class="it"><div><b>QHSE-P603-02</b>风险评估记录表Risk</div><div>AssessmentRecord</div></div><div class="it"><div><b>QHSE-P603-03</b>作业安全分析法JobSafety</div><div>Analysis(JSA)</div></div><div class="it"><div><b>QHSE-P604-01</b>年度QHSE计划Annual</div><div>QHSEPlan</div></div><div class="it"><div><b>QHSE-P604-02</b>项目HSE计划ProjectHSE</div><div>Plan</div></div><div class="it"><div><b>QHSE-P604-03</b>项目HSE报告ProjectHSE</div><div>Report</div></div></div></div></div><div class="a" style="left:1104.5px;top:41px;width:10px;height:472.9px;background:#f0f0f0"></div><svg class="a" style="left:1106px;top:43px" width="8" height="6"><path d="M1,5 L4,1.5 L7,5 Z" fill="#a3a3a3"/></svg><div class="a" style="left:1105.5px;top:51.4px;width:8.5px;height:98px;background:#c1c1c1"></div><svg class="a" style="left:1106px;top:505px" width="8" height="6"><path d="M1,1 L4,4.5 L7,1 Z" fill="#505050"/></svg><div class="a" style="left:0;top:528.5px;width:1129px;height:5.2px;background:#f6f6f6"></div><div class="a" style="left:0;top:533.7px;width:1129px;height:1px;background:#fbfbfb"></div></div><div class="a" style="left:139px;top:606.5px;width:1129px;height:3.5px;background:#0f72b0"></div></body></html>
